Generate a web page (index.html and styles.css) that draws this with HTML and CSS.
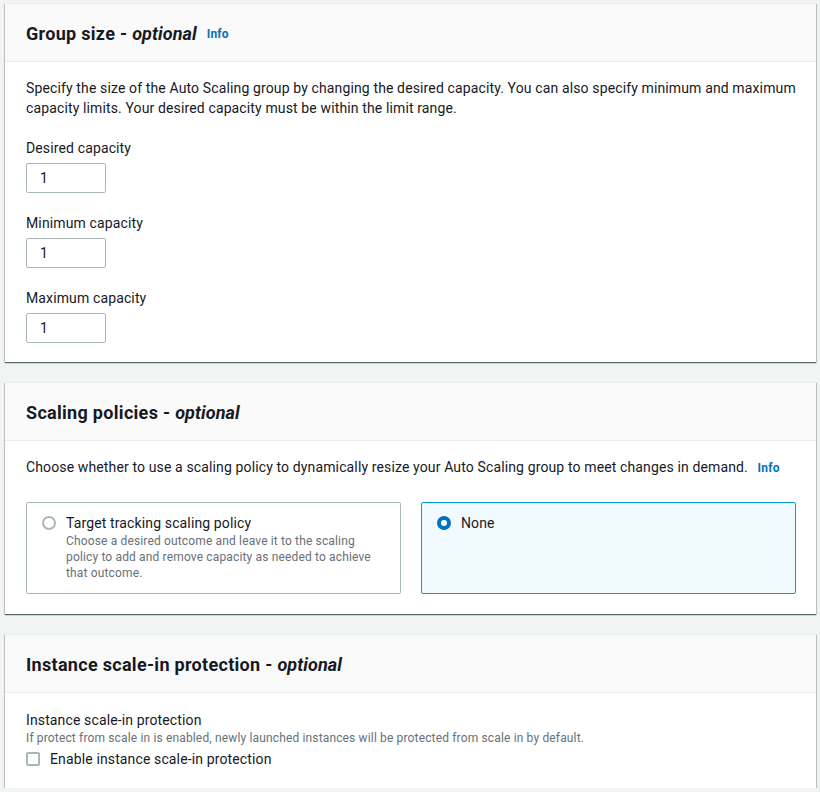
FILE: index.html
```html
<!DOCTYPE html>
<html lang="en">
<head>
<meta charset="utf-8">
<title>Auto Scaling group size</title>
<link rel="stylesheet" href="styles.css">
</head>
<body>
<div class="page">
  <section class="card card-size">
    <header class="card-header">
      <h2 class="card-title">Group size - <i>optional</i></h2>
      <a class="info" href="#">Info</a>
    </header>
    <div class="card-body">
      <p class="desc">Specify the size of the Auto Scaling group by changing the desired capacity. You can also specify minimum and maximum capacity limits. Your desired capacity must be within the limit range.</p>
      <div class="field">
        <label class="label">Desired capacity</label>
        <input class="num" type="text" value="1">
      </div>
      <div class="field">
        <label class="label">Minimum capacity</label>
        <input class="num" type="text" value="1">
      </div>
      <div class="field">
        <label class="label">Maximum capacity</label>
        <input class="num" type="text" value="1">
      </div>
    </div>
  </section>

  <section class="card card-policy">
    <header class="card-header">
      <h2 class="card-title">Scaling policies - <i>optional</i></h2>
    </header>
    <div class="card-body">
      <p class="desc">Choose whether to use a scaling policy to dynamically resize your Auto Scaling group to meet changes in demand. <a class="info" href="#">Info</a></p>
      <div class="tiles">
        <div class="tile">
          <span class="radio"></span>
          <div class="tile-text">
            <div class="tile-title">Target tracking scaling policy</div>
            <div class="tile-desc">Choose a desired outcome and leave it to the scaling policy to add and remove capacity as needed to achieve that outcome.</div>
          </div>
        </div>
        <div class="tile tile-selected">
          <span class="radio radio-on"></span>
          <div class="tile-text">
            <div class="tile-title">None</div>
          </div>
        </div>
      </div>
    </div>
  </section>

  <section class="card card-protect">
    <header class="card-header">
      <h2 class="card-title">Instance scale-in protection - <i>optional</i></h2>
    </header>
    <div class="card-body">
      <div class="label">Instance scale-in protection</div>
      <div class="hint">If protect from scale in is enabled, newly launched instances will be protected from scale in by default.</div>
      <label class="check-row">
        <span class="checkbox"></span>
        <span>Enable instance scale-in protection</span>
      </label>
    </div>
  </section>
</div>
</body>
</html>
```

FILE: styles.css
```css
* { box-sizing: border-box; }

html, body {
  margin: 0;
  padding: 0;
  background: #f2f3f3;
  font-family: Roboto, "Liberation Sans", Arial, sans-serif;
  font-size: 14px;
  line-height: 20px;
  color: #16191f;
  letter-spacing: 0.13px;
}

.page {
  padding: 3px 4px 0 5px;
  display: flex;
  flex-direction: column;
}

.card {
  background: #fff;
  box-shadow: 0 1px 1px 0 rgba(0, 28, 36, 0.5), 1px 1px 1px 0 rgba(0, 28, 36, 0.15), -1px 1px 1px 0 rgba(0, 28, 36, 0.15);
  border-top: 1px solid #eaeded;
}

.card-policy {
  margin-top: 20px;
}

.card-protect {
  margin-top: 20px;
}

.card-header {
  background: #fafafa;
  border-bottom: 1px solid #eaeded;
  height: 58px;
  padding: 2px 20px 0 21px;
  display: flex;
  align-items: center;
  gap: 10px;
}

.card-title {
  margin: 0;
  font-size: 18px;
  line-height: 22px;
  font-weight: 700;
  letter-spacing: 0.3px;
}

.card-title i {
  font-weight: 700;
  letter-spacing: 0.1px;
}

.info {
  font-size: 12px;
  font-weight: 700;
  color: #0073bb;
  text-decoration: none;
  line-height: 16px;
  letter-spacing: 0.2px;
}

.desc .info {
  margin-left: 6px;
}

.card-body {
  padding: 16px 20px 20px 21px;
}

.card-size .card-body {
  padding-top: 16px;
  padding-bottom: 19px;
}

.card-protect .card-body {
  padding-top: 17px;
  padding-bottom: 19px;
}

.desc {
  margin: 0;
}

.field {
  margin-top: 20px;
  display: flex;
  flex-direction: column;
  align-items: flex-start;
  gap: 5px;
}

.label {
  display: block;
  font-size: 14px;
  line-height: 20px;
}

.num {
  width: 80px;
  height: 30px;
  border: 1px solid #aab7b8;
  border-radius: 2px;
  padding: 0 13px;
  font: inherit;
  color: #16191f;
  background: #fff;
}

.tiles {
  margin-top: 25px;
  display: grid;
  grid-template-columns: 1fr 1fr;
  gap: 20px;
}

.tile {
  border: 1px solid #aab7b8;
  border-radius: 2px;
  height: 92px;
  padding: 10px 15px;
  display: flex;
  gap: 10px;
  align-items: flex-start;
}

.tile-selected {
  border-color: #00a1c9;
  background: #f1faff;
}

.radio {
  flex: none;
  width: 14px;
  height: 14px;
  margin-top: 3px;
  border-radius: 50%;
  border: 2px solid #aab7b8;
  background: #fff;
}

.radio-on {
  border: 4px solid #0073bb;
}

.tile-title {
  font-size: 14px;
  line-height: 20px;
}

.tile-desc {
  font-size: 12px;
  line-height: 16px;
  color: #687078;
  letter-spacing: 0.15px;
}

.hint {
  font-size: 12px;
  line-height: 16px;
  color: #687078;
  letter-spacing: 0.15px;
}

.check-row {
  margin-top: 3px;
  display: flex;
  align-items: center;
  gap: 10px;
}

.checkbox {
  width: 14px;
  height: 14px;
  border: 2px solid #aab7b8;
  border-radius: 2px;
  background: #fff;
}
```
